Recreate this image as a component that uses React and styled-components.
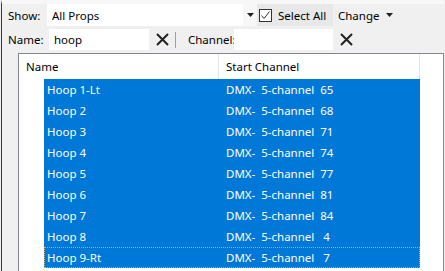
import React from 'react'
import styled, { createGlobalStyle } from 'styled-components'

const GlobalStyle = createGlobalStyle`
  html, body {
    margin: 0;
    background: #f0f0f0;
  }
  body {
    font-family: 'Noto Sans', 'Liberation Sans', sans-serif;
    font-size: 11.5px;
    color: #000;
  }
`

const Frame = styled.div`
  width: 443px;
  height: 271px;
  margin-left: 1px;
  border-left: 1px solid #3a3a3a;
  border-top: 4px solid #f7f7f7;
  background: #f0f0f0;
  overflow: hidden;
  display: flex;
  flex-direction: column;
  box-sizing: border-box;
`

const Bar = styled.div`
  display: flex;
  align-items: center;
  height: ${p => p.h || 22}px;
  margin-top: ${p => p.mt || 0}px;
`

const Label = styled.span`
  width: ${p => p.w}px;
  padding-left: 6px;
  box-sizing: border-box;
  flex-shrink: 0;
`

const Field = styled.div`
  width: ${p => p.w}px;
  height: 100%;
  background: #fff;
  display: flex;
  align-items: center;
  padding-left: 5px;
  box-sizing: border-box;
  flex-shrink: 0;
`

const ArrowZone = styled.div`
  width: 14px;
  height: 100%;
  background: #f7f7f7;
  display: flex;
  align-items: center;
  justify-content: center;
`

const SelectAll = styled.label`
  width: 76px;
  height: 100%;
  background: #e8e8e8;
  display: flex;
  align-items: center;
  gap: 6px;
  padding-left: 2px;
  box-sizing: border-box;
`

const Box = styled.span`
  width: 11px;
  height: 11px;
  border: 1px solid #333;
  background: #fff;
  display: flex;
  align-items: center;
  justify-content: center;
`

const MenuButton = styled.div`
  display: flex;
  align-items: center;
  gap: 6px;
  padding-left: 5px;
`

const ClearButton = styled.div`
  width: 26px;
  height: 100%;
  display: flex;
  align-items: center;
  justify-content: center;
  flex-shrink: 0;
`

const Sep = styled.div`
  width: 1px;
  height: 16px;
  background: #a0a0a0;
  margin-right: 6px;
`

const List = styled.div`
  margin: 3px 0 0 16px;
  width: 424px;
  flex: 1;
  border: 1px solid #828790;
  border-bottom: none;
  background: #fff;
`

const Header = styled.div`
  display: flex;
  height: 25px;
`

const HeadCell = styled.div`
  width: ${p => p.w}px;
  border-right: 1px solid #e5e5e5;
  display: flex;
  align-items: center;
  padding-left: ${p => p.pl}px;
  box-sizing: border-box;
`

const Rows = styled.div`
  padding-left: 25px;
`

const Row = styled.div`
  display: flex;
  width: 376px;
  height: 21px;
  align-items: center;
  background: #0078d7;
  color: #fff;
  box-sizing: border-box;
  outline: ${p => (p.focus ? '1px dotted #f0a040' : 'none')};
  outline-offset: -1px;
`

const Cell = styled.div`
  width: ${p => p.w}px;
  padding-left: 3px;
  white-space: pre;
  box-sizing: border-box;
`

const Caret = () => (
  <svg width="7" height="4" viewBox="0 0 7 4">
    <path d="M0 0h7L3.5 4z" fill="#222" />
  </svg>
)

const Cross = () => (
  <svg width="13" height="13" viewBox="0 0 13 13">
    <path d="M1 1l11 11M12 1L1 12" stroke="#222" strokeWidth="2" />
  </svg>
)

const Check = () => (
  <svg width="9" height="9" viewBox="0 0 9 9">
    <path d="M0.5 4.5l2.5 3 5.5-7" stroke="#333" strokeWidth="1" fill="none" />
  </svg>
)

const rows = [
  ['Hoop 1-Lt', 'DMX-  5-channel  65'],
  ['Hoop 2', 'DMX-  5-channel  68'],
  ['Hoop 3', 'DMX-  5-channel  71'],
  ['Hoop 4', 'DMX-  5-channel  74'],
  ['Hoop 5', 'DMX-  5-channel  77'],
  ['Hoop 6', 'DMX-  5-channel  81'],
  ['Hoop 7', 'DMX-  5-channel  84'],
  ['Hoop 8', 'DMX-  5-channel   4'],
  ['Hoop 9-Rt', 'DMX-  5-channel   7'],
]

export default function App() {
  return (
    <>
      <GlobalStyle />
      <Frame>
        <Bar h={22}>
          <Label w={45}>Show:</Label>
          <Field w={196}>All Props</Field>
          <ArrowZone><Caret /></ArrowZone>
          <SelectAll>
            <Box><Check /></Box>
            Select All
          </SelectAll>
          <MenuButton>Change <Caret /></MenuButton>
        </Bar>
        <Bar h={21} mt={3}>
          <Label w={47}>Name:</Label>
          <Field w={100}>hoop</Field>
          <ClearButton><Cross /></ClearButton>
          <Sep />
          <Label w={52}>Channel:</Label>
          <Field w={99} />
          <ClearButton><Cross /></ClearButton>
        </Bar>
        <List>
          <Header>
            <HeadCell w={200} pl={7}>Name</HeadCell>
            <HeadCell w={201} pl={7}>Start Channel</HeadCell>
          </Header>
          <Rows>
            {rows.map(([name, ch], i) => (
              <Row key={name} focus={i === rows.length - 1}>
                <Cell w={179}>{name}</Cell>
                <Cell w={197}>{ch}</Cell>
              </Row>
            ))}
          </Rows>
        </List>
      </Frame>
    </>
  )
}
